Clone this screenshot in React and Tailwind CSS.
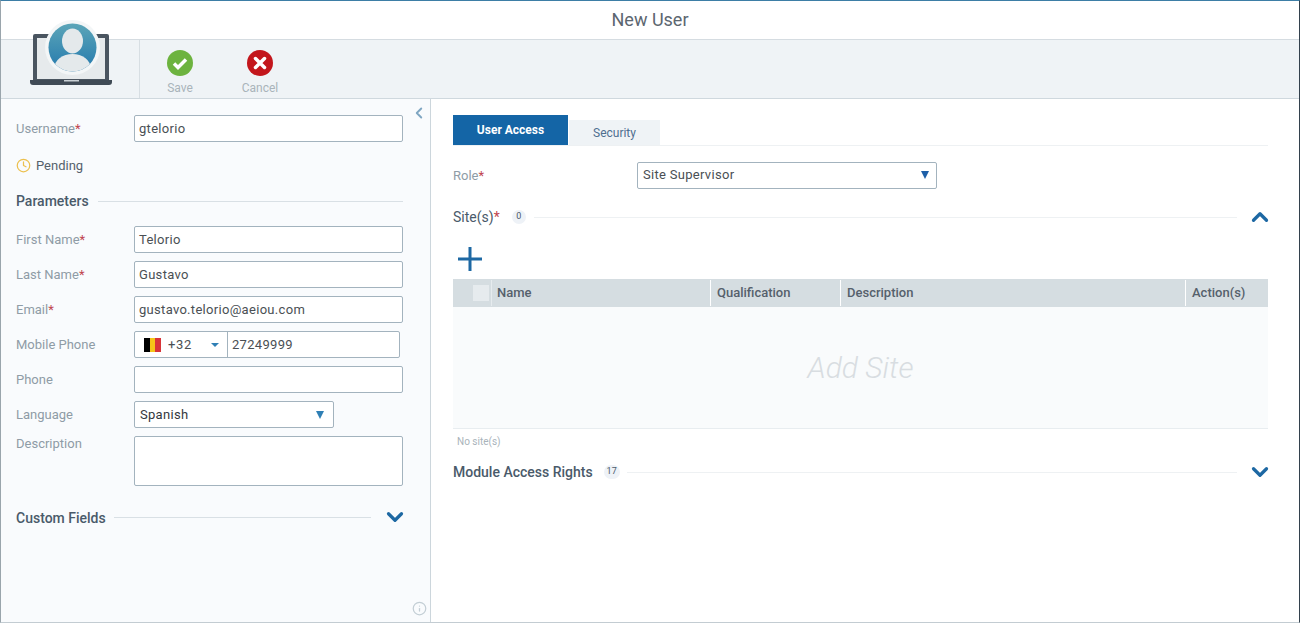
import React from 'react';
import { ChevronLeft, ChevronDown, ChevronUp, Info, Clock } from 'lucide-react';

const Req = () => <span className="text-[#c0454f]">*</span>;

const Field = ({ label, required, children, top }) => (
  <div className={`flex ${top ? 'items-start h-[50px]' : 'items-center h-[27px]'}`}>
    <label className={`w-[118px] shrink-0 text-[13px] text-[#8f9ca6] ${top ? '-mt-[2px]' : ''}`}>
      {label}
      {required && <Req />}
    </label>
    {children}
  </div>
);

const TextBox = ({ value, className = 'w-[269px]' }) => (
  <div className={`h-[27px] ${className} bg-white border border-[#a3b3be] rounded-[2px] px-[4px] flex items-center text-[13px] tracking-[0.3px] text-[#4a4f54]`}>
    {value}
  </div>
);

const Arrow = ({ color = 'border-t-[#2f7fb5]' }) => (
  <span className={`w-0 h-0 border-x-[4.500px] border-x-transparent border-t-[8px] ${color}`} />
);

const Avatar = () => (
  <svg width="86" height="68" viewBox="0 0 86 68" className="absolute left-[29px] top-[19px]">
    <defs>
      <linearGradient id="av" x1="0" y1="0" x2="0" y2="1">
        <stop offset="0" stopColor="#5ba5b8" />
        <stop offset="1" stopColor="#2479ad" />
      </linearGradient>
      <clipPath id="avc">
        <circle cx="42.500" cy="27.500" r="24" />
      </clipPath>
    </defs>
    <path d="M3 16a2 2 0 0 1 2-2h72a2 2 0 0 1 2 2v46H3z" fill="#4a5560" />
    <rect x="7" y="18" width="68" height="41" fill="#e6eaec" />
    <path d="M0 60h82v2a3 3 0 0 1-3 3H3a3 3 0 0 1-3-3z" fill="#3f4a55" />
    <rect x="34" y="60" width="15" height="1.500" fill="#c9d0d5" />
    <circle cx="42.500" cy="27.500" r="27.500" fill="#f3f6f7" />
    <circle cx="42.500" cy="27.500" r="24" fill="url(#av)" />
    <g clipPath="url(#avc)">
      <ellipse cx="42.500" cy="21" rx="10.500" ry="12.500" fill="#e4e9eb" />
      <ellipse cx="42.500" cy="48" rx="18" ry="14" fill="#e4e9eb" />
    </g>
  </svg>
);

const SaveIcon = () => (
  <svg width="26" height="26" viewBox="0 0 26 26">
    <circle cx="13" cy="13" r="13" fill="#6db33f" />
    <path d="M7 13.500l4 4 8-8" fill="none" stroke="#fff" strokeWidth="3.500" />
  </svg>
);

const CancelIcon = () => (
  <svg width="26" height="26" viewBox="0 0 26 26">
    <circle cx="13" cy="13" r="13" fill="#c3161c" />
    <path d="M8.500 8.500l9 9M17.500 8.500l-9 9" fill="none" stroke="#fff" strokeWidth="3.500" strokeLinecap="round" />
  </svg>
);

const Flag = () => (
  <span className="flex h-[14px] w-[17px] ml-[9px] shrink-0">
    <span className="flex-1 bg-black" />
    <span className="flex-1 bg-[#f5c518]" />
    <span className="flex-1 bg-[#d8353a]" />
  </span>
);

const Badge = ({ children, className = 'w-[14px]' }) => (
  <span className={`h-[14px] ${className} rounded-full bg-[#eef2f7] flex items-center justify-center text-[9px] text-[#4a5a6a]`}>
    {children}
  </span>
);

export default function App() {
  return (
    <div className="h-[623px] w-[1300px] flex flex-col bg-white overflow-hidden relative border-t border-t-[#3d7ea6] border-l border-l-[#9aa5ac] border-r border-r-[#33414d] border-b border-b-[#c3ccd2] font-['Roboto',sans-serif]">
      <div className="h-[39px] shrink-0 flex items-center justify-center pb-[2px] text-[18px] text-[#5c6670] border-b border-[#d5dce1]">
        New User
      </div>

      <div className="h-[59px] shrink-0 bg-[#eff3f6] border-b border-[#cfd8de] flex">
        <div className="w-[139px] shrink-0 border-r border-[#d7dee3]" />
        <div className="w-[80px] flex flex-col items-center pt-[10px] gap-[3px] text-[12px] text-[#a9b3ba]">
          <SaveIcon />
          <span>Save</span>
        </div>
        <div className="w-[80px] flex flex-col items-center pt-[10px] gap-[3px] text-[12px] text-[#a9b3ba]">
          <CancelIcon />
          <span>Cancel</span>
        </div>
      </div>
      <Avatar />

      <div className="flex flex-1 min-h-0">
        <aside className="w-[430px] shrink-0 bg-[#f9fbfd] border-r border-[#ccd6dc] pl-[15px] pr-[27px] pt-[16px] relative">
          <ChevronLeft className="absolute right-[2px] top-[5px] w-[18px] h-[18px] text-[#7fa6c2]" strokeWidth={2.500} />
          <Field label="Username" required>
            <TextBox value="gtelorio" />
          </Field>
          <div className="flex items-center gap-[5px] mt-[16px] h-[16px] text-[13px] text-[#55616c]">
            <Clock className="w-[15px] h-[15px] text-[#ecc04f] -mt-[2px]" strokeWidth={2} />
            <span>Pending</span>
          </div>
          <div className="flex items-center gap-[9px] mt-[18px] h-[18px]">
            <span className="text-[14px] font-medium text-[#4a5a6a] whitespace-nowrap">Parameters</span>
            <span className="flex-1 h-px bg-[#d9e0e5]" />
          </div>
          <div className="flex flex-col gap-[8px] mt-[16px]">
            <Field label="First Name" required>
              <TextBox value="Telorio" />
            </Field>
            <Field label="Last Name" required>
              <TextBox value="Gustavo" />
            </Field>
            <Field label="Email" required>
              <TextBox value="gustavo.telorio@aeiou.com" />
            </Field>
            <Field label="Mobile Phone">
              <div className="h-[27px] w-[266px] bg-white border border-[#a3b3be] rounded-[2px] flex items-center text-[13px] tracking-[0.3px] text-[#4a4f54]">
                <div className="w-[93px] h-full flex items-center border-r border-[#a3b3be]">
                  <Flag />
                  <span className="ml-[7px] tracking-[0.6px]">+32</span>
                  <span className="ml-[19px] w-0 h-0 border-x-[4px] border-x-transparent border-t-[4px] border-t-[#2f7fb5]" />
                </div>
                <span className="ml-[4px]">27249999</span>
              </div>
            </Field>
            <Field label="Phone">
              <TextBox value="" />
            </Field>
            <Field label="Language">
              <div className="h-[27px] w-[200px] bg-white border border-[#a3b3be] rounded-[2px] pl-[5px] pr-[9px] flex items-center justify-between text-[13px] tracking-[0.3px] text-[#33383d]">
                <span>Spanish</span>
                <Arrow />
              </div>
            </Field>
            <Field label="Description" top>
              <div className="h-[50px] w-[269px] bg-white border border-[#a3b3be] rounded-[2px]" />
            </Field>
          </div>
          <div className="flex items-center mt-[22px] h-[18px]">
            <span className="text-[14px] font-medium text-[#4a5a6a] whitespace-nowrap pt-[2px]">Custom Fields</span>
            <span className="w-[257px] h-px bg-[#d9e0e5] ml-[8px]" />
            <ChevronDown className="w-[26px] h-[26px] text-[#1d68a3] ml-auto -mr-[5px]" strokeWidth={3} />
          </div>
          <Info className="absolute right-[3px] bottom-[6px] w-[15px] h-[15px] text-[#c3ced5]" />
        </aside>

        <main className="flex-1 min-w-0 pl-[22px] pr-[31px] pt-[16px]">
          <div className="flex items-end h-[31px] border-b border-[#eef1f3]">
            <div className="w-[115px] h-[30px] bg-[#1465a6] text-white text-[12px] font-bold flex items-center justify-center pb-[1px]">
              User Access
            </div>
            <div className="w-[91px] h-[25px] ml-px bg-[#eff3f6] text-[#4f6f90] text-[12px] flex items-center justify-center">
              Security
            </div>
          </div>

          <div className="flex items-center mt-[16px] h-[27px]">
            <span className="w-[184px] text-[13px] text-[#8f9ca6]">
              Role
              <Req />
            </span>
            <div className="w-[300px] h-[27px] bg-white border border-[#a3b3be] rounded-[2px] pl-[5px] pr-[7px] pb-[2px] flex items-center justify-between text-[13px] tracking-[0.3px] text-[#4a4f54]">
              <span>Site Supervisor</span>
              <Arrow color="border-t-[#1d5fa8]" />
            </div>
          </div>

          <div className="flex items-center mt-[19px] h-[18px]">
            <span className="text-[14px] text-[#4a5a6a]">
              Site(s)
              <Req />
            </span>
            <Badge className="w-[14px] ml-[12px]">0</Badge>
            <span className="w-[703px] h-px bg-[#eef1f3] ml-[8px]" />
            <ChevronUp className="w-[26px] h-[26px] text-[#1d68a3] ml-auto -mr-[5px]" strokeWidth={3} />
          </div>

          <svg width="26" height="26" viewBox="0 0 26 26" className="mt-[20px] ml-[4px] block">
            <path d="M13 1v24M1 13h24" stroke="#1d68a3" strokeWidth="3" fill="none" />
          </svg>

          <div className="mt-[7px] h-[28px] bg-[#d5dde1] flex text-[13px] font-medium text-[#55616c]">
            <div className="w-[38px] shrink-0 flex items-center justify-end pr-[2px]">
              <span className="w-[16px] h-[16px] bg-[#e6ebee]" />
            </div>
            <div className="w-[219px] flex items-center pl-[5px] border-l border-[#e6ebee] my-px">Name</div>
            <div className="w-[130px] flex items-center pl-[6px] border-l border-white my-px">Qualification</div>
            <div className="w-[345px] flex items-center pl-[6px] border-l border-white my-px">Description</div>
            <div className="flex-1 flex items-center pl-[6px] border-l border-white my-px">Action(s)</div>
          </div>
          <div className="h-[122px] bg-[#f9fbfc] border-b border-[#e8edf0] flex items-center justify-center text-[30px] italic font-light text-[#d8dde1]">
            Add Site
          </div>
          <div className="mt-[6px] ml-[4px] text-[10px] text-[#a9b3ba] h-[12px] flex items-center">No site(s)</div>

          <div className="flex items-center mt-[16px] h-[18px]">
            <span className="text-[14px] font-medium text-[#4a5a6a] whitespace-nowrap">Module Access Rights</span>
            <Badge className="w-[16px] ml-[11px]">17</Badge>
            <span className="w-[610px] h-px bg-[#eef1f3] ml-[7px]" />
            <ChevronDown className="w-[26px] h-[26px] text-[#1d68a3] ml-auto -mr-[5px]" strokeWidth={3} />
          </div>
        </main>
      </div>
    </div>
  );
}
